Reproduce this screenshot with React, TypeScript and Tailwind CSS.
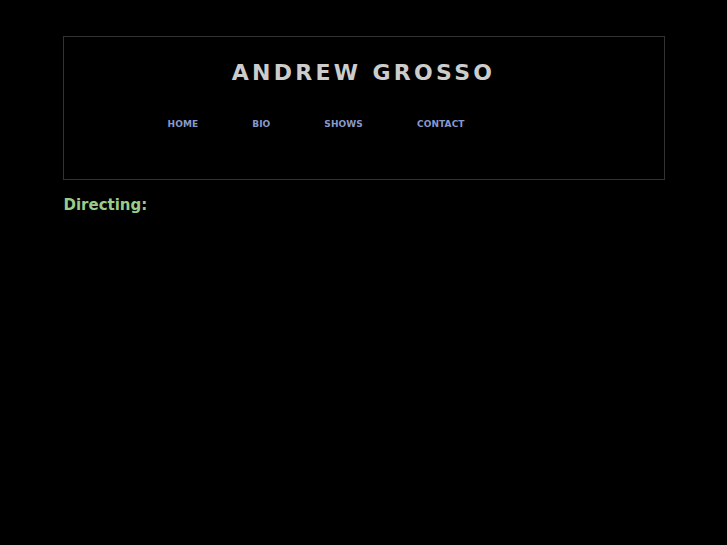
export default function App() {
  const links = ["HOME", "BIO", "SHOWS", "CONTACT"];
  return (
    <div
      className="min-h-[545px] bg-black pt-[36px]"
      style={{ fontFamily: '"DejaVu Sans", Verdana, sans-serif' }}
    >
      <div className="mx-auto w-[602px]">
        <header className="border border-[#333333] pt-[23px] pb-[48px]">
          <h1 className="text-center text-[22px] font-bold leading-[26px] tracking-[3.3px] text-[#cccccc]">
            ANDREW GROSSO
          </h1>
          <nav className="mt-[32px] flex gap-[54px] pl-[104px]">
            {links.map((l) => (
              <a
                key={l}
                href="#"
                className="text-[9px] font-bold leading-[13px] tracking-[0.1px] text-[#8899cc]"
              >
                {l}
              </a>
            ))}
          </nav>
        </header>
        <h2 className="mt-[16px] pl-[1px] text-[15px] font-bold leading-[18px] text-[#99cc88]">
          Directing:
        </h2>
      </div>
    </div>
  );
}
